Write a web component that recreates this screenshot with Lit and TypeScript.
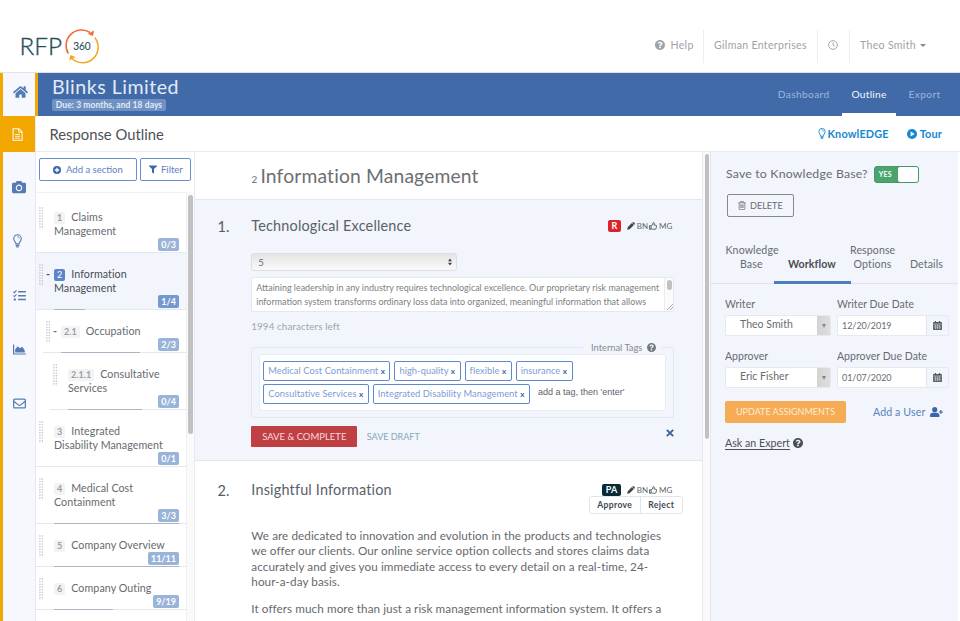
import { LitElement, html, css, svg, nothing } from "lit";
import { customElement, property } from "lit/decorators.js";
import { classMap } from "lit/directives/class-map.js";

const ICONS: Record<string, { box: string; body: unknown }> = {
  home: { box: "0 0 576 512", body: svg`<path fill="currentColor" d="M280.37 148.26L96 300.11V464a16 16 0 0 0 16 16l112.06-.29a16 16 0 0 0 15.92-16V368a16 16 0 0 1 16-16h64a16 16 0 0 1 16 16v95.64a16 16 0 0 0 16 16.05L464 480a16 16 0 0 0 16-16V300L295.67 148.26a12.19 12.19 0 0 0-15.3 0zM571.6 251.47L488 182.56V44.05a12 12 0 0 0-12-12h-56a12 12 0 0 0-12 12v72.61L318.47 43a48 48 0 0 0-61 0L4.34 251.47a12 12 0 0 0-1.6 16.9l25.5 31A12 12 0 0 0 45.15 301l235.22-193.74a12.19 12.19 0 0 1 15.3 0L530.9 301a12 12 0 0 0 16.9-1.6l25.5-31a12 12 0 0 0-1.7-16.93z"/>` },
  help: { box: "8 8 496 496", body: svg`<path fill="currentColor" d="M504 256c0 136.997-111.043 248-248 248S8 392.997 8 256C8 119.083 119.043 8 256 8s248 111.083 248 248zM262.655 90c-54.497 0-89.255 22.957-116.549 63.758-3.536 5.286-2.353 12.415 2.715 16.258l34.699 26.31c5.205 3.947 12.621 3.008 16.665-2.122 17.864-22.658 30.113-35.797 57.303-35.797 20.429 0 45.698 13.148 45.698 32.958 0 14.976-12.363 22.667-32.534 33.976C247.128 238.528 216 254.941 216 296v4c0 6.627 5.373 12 12 12h56c6.627 0 12-5.373 12-12v-1.333c0-28.462 83.186-29.647 83.186-106.667 0-58.002-60.165-102-116.531-102zM256 338c-25.365 0-46 20.635-46 46 0 25.364 20.635 46 46 46s46-20.636 46-46c0-25.365-20.635-46-46-46z"/>` },
  camera: { box: "0 0 512 512", body: svg`<path fill="currentColor" d="M512 144v288c0 26.500-21.500 48-48 48H48c-26.500 0-48-21.500-48-48V144c0-26.500 21.500-48 48-48h88l12.300-32.900c7-18.700 24.900-31.100 44.900-31.100h125.500c20 0 37.900 12.400 44.900 31.100L376 96h88c26.500 0 48 21.500 48 48zM376 288c0-66.200-53.800-120-120-120s-120 53.800-120 120 53.800 120 120 120 120-53.800 120-120zm-40 0c0 44-36 80-80 80s-80-36-80-80 36-80 80-80 80 36 80 80z"/>` },
  filter: { box: "0 0 512 512", body: svg`<path fill="currentColor" d="M487.976 0H24.028C2.710 0-8.047 25.866 7.058 40.971L192 225.941V432c0 7.831 3.821 15.170 10.237 19.662l80 55.980C298.020 518.690 320 507.493 320 487.980V225.941l184.947-184.970C520.021 25.896 509.338 0 487.976 0z"/>` },
  file: { box: "0 0 12 14", body: svg`<g fill="none" stroke="currentColor" stroke-width="1.100"><path d="M1.200.7h6.200l3.600 3.600v9H1.200z"/><path d="M7.200.8v3.700h3.700M3.400 7h5.200M3.400 9h5.200M3.400 11h5.200" stroke-width=".9"/></g>` },
  bulb: { box: "0 0 10 15", body: svg`<g fill="none" stroke="currentColor" stroke-width="1.200" stroke-linecap="round"><path d="M3.300 10.700C3.200 8.900.8 7.700.8 4.800a4.200 4.200 0 0 1 8.400 0c0 2.900-2.400 4.100-2.500 5.900z"/><path d="M3.400 12.300h3.200M4 13.900h2" stroke-width="1.400"/><path d="M5 2.600c1.300 0 2 .8 2 1.800" stroke-width=".9"/></g>` },
  tasks: { box: "0 0 14 12", body: svg`<g fill="none" stroke="currentColor"><path stroke-width="1.700" d="M5.500 2H14M5.500 6.200H14M5.500 10.400H14"/><path stroke-width="1.200" d="M.3 1.900l1.200 1L3.700.5M.3 6.100l1.200 1 2.200-2.400"/></g><rect x=".7" y="9.300" width="2.300" height="2.200" fill="currentColor"/>` },
  chart: { box: "0 0 14 11", body: svg`<path fill="currentColor" d="M0 0h1.300v9.700H14V11H0zM2.300 8.800V5.600L5 2l2.500 2.200L10 2.500l2.600 3.800v2.500z"/>` },
  mail: { box: "0 0 14 11", body: svg`<g fill="none" stroke="currentColor" stroke-width="1.300"><rect x=".7" y=".7" width="12.600" height="9.600" rx="1"/><path d="M.9 3l4.700 4c.8.700 2 .7 2.800 0l4.700-4"/></g>` },
  plus: { box: "0 0 16 16", body: svg`<circle cx="8" cy="8" r="8" fill="currentColor"/><path d="M8 3.600v8.800M3.600 8h8.800" stroke="#fff" stroke-width="2.600"/>` },
  clock: { box: "0 0 16 16", body: svg`<g fill="none" stroke="currentColor" stroke-width="1.500"><circle cx="8" cy="8" r="7"/><path d="M8.200 3.500V8.600l2.600 1.300"/></g>` },
  play: { box: "0 0 16 16", body: svg`<circle cx="8" cy="8" r="8" fill="currentColor"/><path d="M5.800 3.900v8.200L12.300 8z" fill="#fff"/>` },
  pencil: { box: "0 0 16 16", body: svg`<path fill="currentColor" d="M.4 15.600l1-5L9.800 2.200l4 4-8.400 8.400zM10.600 1.400l1-1c.5-.5 1.300-.5 1.800 0l2.200 2.200c.5.5.5 1.300 0 1.800l-1 1z"/>` },
  thumb: { box: "0 0 16 16", body: svg`<g fill="none" stroke="currentColor" stroke-width="1.600" stroke-linejoin="round"><path d="M1 7.500h3v7H1zM4 8c2-.8 3.300-2.500 3.600-4.200C7.700 2.300 8 1 9 1c1.500 0 2 1.300 1.700 2.600L10 6.300h3.600c1.300 0 1.700 1 1.300 1.900l-.6 4.300c-.2 1.300-.9 2-2 2H7.500L4 13.300"/></g>` },
  trash: { box: "0 0 14 16", body: svg`<g fill="none" stroke="currentColor" stroke-width="1.300"><path d="M.5 3.200h13M4.500 3V1h5v2M2 3.300v11c0 .6.400 1 1 1h8c.6 0 1-.4 1-1v-11M5 6v6.500M7 6v6.500M9 6v6.500"/></g>` },
  calendar: { box: "0 0 14 14", body: svg`<path fill="currentColor" d="M0 2.800C0 2 .7 1.600 1.300 1.600h1.500V0h2v1.600h4.400V0h2v1.600h1.500c.7 0 1.300.5 1.300 1.200v1.500H0zM0 5h14v7.800c0 .7-.6 1.200-1.300 1.200H1.300C.6 14 0 13.500 0 12.800z"/><path stroke="#f2f5fb" stroke-width=".7" d="M1 7.800h12M1 10.700h12M4 5.200V13M7 5.200V13M10 5.200V13"/>` },
  userplus: { box: "0 0 18 14", body: svg`<g fill="currentColor"><circle cx="6.500" cy="3.700" r="3.600"/><path d="M0 14v-2.500C0 9.300 1.700 8 3.800 8h5.400C11.300 8 13 9.300 13 11.500V14z"/></g><path d="M15.200 4.300v5.400M12.500 7H18" stroke="currentColor" stroke-width="1.500"/>` },
  cross: { box: "0 0 10 10", body: svg`<path d="M1 1l8 8M9 1L1 9" stroke="currentColor" stroke-width="2.300"/>` },
  grip: { box: "0 0 4 22", body: svg`<path d="M.9.300V22M3.400.300V22" stroke="currentColor" stroke-width="1.300" stroke-dasharray="1.400 1.270"/>` },
};

@customElement("ui-icon")
class UiIcon extends LitElement {
  @property() name = "";
  static styles = css`
    :host { display: inline-block; flex: none; width: 10px; height: 10px; }
    svg { display: block; width: 100%; height: 100%; }
  `;
  render() {
    const i = ICONS[this.name];
    return i ? html`<svg viewBox=${i.box}>${i.body}</svg>` : nothing;
  }
}

interface Section {
  no: string; lines: string[]; count: string; level: number;
  open?: boolean; active?: boolean; progress: number;
}

const SECTIONS: Section[] = [
  { no: "1", lines: ["Claims", "Management"], count: "0/3", level: 0, progress: 0 },
  { no: "2", lines: ["Information", "Management"], count: "1/4", level: 0, open: true, active: true, progress: 25 },
  { no: "2.1", lines: ["Occupation"], count: "2/3", level: 1, open: true, progress: 67 },
  { no: "2.1.1", lines: ["Consultative", "Services"], count: "0/4", level: 2, progress: 67 },
  { no: "3", lines: ["Integrated", "Disability Management"], count: "0/1", level: 0, progress: 0 },
  { no: "4", lines: ["Medical Cost", "Containment"], count: "3/3", level: 0, progress: 100 },
  { no: "5", lines: ["Company Overview"], count: "11/11", level: 0, progress: 100 },
  { no: "6", lines: ["Company Outing"], count: "9/19", level: 0, progress: 47 },
];

const font = css`
  :host { font-family: Lato, "Noto Sans", sans-serif; }
  * { box-sizing: border-box; }
`;

@customElement("outline-list")
class OutlineList extends LitElement {
  static styles = [font, css`
    :host { display: flex; flex-direction: column; width: 159px; border-right: 1px solid #e6ebf3; background: #fff; }
    .actions { display: flex; gap: 3px; padding: 6px 0 0 3px; height: 40px; }
    .btn { height: 23px; display: flex; align-items: center; border: 1px solid #6690cf; border-radius: 2px; color: #5a82c2; font-size: 9.500px; white-space: nowrap; }
    .btn ui-icon { color: #3c65ae; }
    .add { width: 98px; padding-left: 13px; gap: 5px; }
    .add ui-icon { width: 8px; height: 8px; }
    .filter { width: 51px; padding-left: 8px; gap: 4px; }
    .filter ui-icon { width: 8px; height: 9px; }
    .area { flex: 1; min-height: 0; display: flex; }
    .list { width: 150px; overflow: hidden; border-top: 1px solid #f0f2f6; padding-top: 3px; }
    .track { width: 8px; background: #fafafa; border-left: 1px solid #f0f0f0; padding: 3px 0 0 1px; }
    .thumb { width: 5px; height: 239px; border-radius: 3px; background: #c1c1c1; }
    .item { display: flex; position: relative; padding-top: 14px; height: 57px; border-bottom: 1px solid #e4e9f1; color: #666a6e; font-size: 10.700px; line-height: 14px; letter-spacing: .06px; white-space: nowrap; }
    .short { height: 43px; }
    .next { border: 0; }
    .active { background: #f2f5fb; color: #454c54; }
    .l1 { margin-left: 7px; }
    .l2 { margin-left: 14px; }
    .grip { margin: -3px 0 0 3px; width: 4px; height: 22px; color: #c3c6c9; }
    .toggle { width: 11px; text-align: right; font-weight: 700; padding-right: 4px; }
    .no { display: inline-block; min-width: 11px; height: 12px; line-height: 12px; text-align: center; padding: 0 3px; margin-right: 6px; border-radius: 2px; background: #f2f3f4; color: #9a9ea3; font-weight: 700; font-size: 9px; }
    .active .no { background: #5b86cc; color: #fff; font-weight: 400; }
    .count { position: absolute; right: 7px; bottom: 1px; height: 13px; line-height: 13px; border-radius: 2px; padding: 0 3px; background: #9ab3d9; color: #fff; font-size: 9px; font-weight: 700; letter-spacing: 0; }
    .active .count { background: #7499d0; }
    .bar { position: absolute; left: 18px; right: 7px; bottom: -1px; height: 1px; }
    .fill { height: 1px; background: #adb6c3; }
  `];
  render() {
    return html`
      <div class="actions">
        <div class="btn add"><ui-icon name="plus"></ui-icon>Add a section</div>
        <div class="btn filter"><ui-icon name="filter"></ui-icon>Filter</div>
      </div>
      <div class="area">
        <div class="list">
          ${SECTIONS.map((s) => html`
            <div class=${classMap({ item: true, short: s.lines.length === 1, active: !!s.active, l1: s.level === 1, l2: s.level === 2 })}>
              <ui-icon class="grip" name="grip"></ui-icon>
              <div class="toggle">${s.open ? "-" : nothing}</div>
              <div class="text"><span class="no">${s.no}</span>${s.lines[0]}${s.lines.slice(1).map((l) => html`<br>${l}`)}</div>
              <div class="count">${s.count}</div>
              <div class="bar"><div class="fill" style="width:${s.progress}%"></div></div>
            </div>`)}
          <div class="item next"><ui-icon class="grip" name="grip"></ui-icon></div>
        </div>
        <div class="track"><div class="thumb"></div></div>
      </div>`;
  }
}

const TAG_ROWS = [
  ["Medical Cost Containment", "high-quality", "flexible", "insurance"],
  ["Consultative Services", "Integrated Disability Management"],
];

@customElement("question-pane")
class QuestionPane extends LitElement {
  static styles = [font, css`
    :host { display: flex; flex: 1; min-width: 0; overflow: hidden; }
    .content { width: 508px; color: #65696e; white-space: nowrap; overflow: hidden; }
    .track { width: 8px; background: #fafafa; border-left: 1px solid #e8eaee; padding: 2px 0 0 2px; }
    .thumb { width: 4px; height: 285px; border-radius: 3px; background: #c1c1c1; }
    .title { height: 48px; padding: 10px 0 0 56.500px; border-bottom: 1px solid #e2e8f1; font-size: 19.300px; line-height: 28px; letter-spacing: .15px; color: #6c6f72; }
    .title small { font-size: 10px; margin-right: 3px; }
    .q { display: grid; grid-template-columns: 56.300px 423px; }
    .q1 { height: 261px; background: #f2f5fb; border-bottom: 1px solid #e0e5f0; padding-top: 15px; }
    .q2 { padding-top: 18px; }
    .num { padding-left: 22.500px; font-size: 14.500px; line-height: 24px; color: #555c63; }
    .head { display: flex; justify-content: space-between; height: 22px; font-size: 14.400px; line-height: 22px; letter-spacing: .2px; color: #59616a; }
    .meta { display: flex; align-items: center; height: 21px; font-size: 8px; letter-spacing: 0; padding-right: 2px; color: #5c646c; }
    .meta ui-icon { width: 8px; height: 8px; margin-right: 2px; color: #3b4752; }
    .meta ui-icon + span + ui-icon { margin-left: 1px; }
    .state { height: 12px; line-height: 12px; border-radius: 2px; color: #fff; font-size: 9px; font-weight: 700; padding: 0 3.500px; margin-right: 6px; }
    .red { background: #d8252c; }
    .dark { background: #062a38; }
    .select { margin-top: 16px; width: 206px; height: 18px; display: flex; align-items: center; justify-content: space-between; padding: 0 4px 0 6px; border: 1px solid #dcdfe5; border-radius: 3px; background: linear-gradient(#e4e4e4, #fafafa); font-size: 9.500px; }
    .select svg { width: 4px; height: 8px; }
    .editor { margin-top: 6px; height: 35px; display: flex; background: #fff; border: 1px solid #e4e8f0; border-radius: 2px; font-size: 8.950px; line-height: 14px; color: #7b7f83; }
    .editor p { margin: 0; padding: 3px 0 0 4px; flex: 1; }
    .ebar { width: 9px; background: #fbfbfb; border-left: 1px solid #ececec; padding: 2px 0 0 2px; display: flex; flex-direction: column; justify-content: space-between; }
    .ethumb { width: 5px; height: 10px; border-radius: 3px; background: #c1c1c1; }
    .ebar svg { width: 6px; height: 7px; }
    .left { margin-top: 8px; font-size: 9.800px; line-height: 13px; letter-spacing: .1px; color: #a0a5aa; }
    .tags { margin: 7px 0 0; padding: 0 7px 7px; height: 78px; border: 1px solid #e3e7ee; border-radius: 3px; font-size: 9.300px; }
    .tags legend { margin-left: auto; margin-right: 4px; padding: 0 6px 0 8px; height: 14px; display: flex; align-items: center; gap: 5px; color: #858a8f; }
    .tags legend ui-icon { width: 9px; height: 9px; color: #74797f; }
    .box { height: 57px; background: #fff; border: 1px solid #e8ecf3; padding: 6px 3px; border-radius: 2px; display: flex; flex-direction: column; gap: 3px; }
    .row { display: flex; gap: 4px; }
    .tag { height: 20px; line-height: 18px; border: 1px solid #5f8acf; border-radius: 2px; padding: 0 4.500px 0 4px; color: #7a9dd3; letter-spacing: .06px; }
    .tag b { color: #3a62a7; font-size: 8px; }
    .hint { font: 9px/16px "Liberation Sans", sans-serif; margin-left: 4px; color: #5f6368; }
    .foot { display: flex; margin-top: 8px; align-items: center; }
    .save { width: 106px; height: 21px; line-height: 21px; text-align: center; background: #c03f42; border-radius: 1px; color: #f6dcdc; font-size: 9.500px; }
    .draft { flex: 1; padding-left: 9.500px; font-size: 9px; color: #84a8c0; }
    .foot ui-icon { width: 8px; height: 8px; margin-top: -8px; color: #3b6399; }
    .decide { display: flex; width: 94px; height: 18px; margin: -5px -8.500px 0 auto; border: 1px solid #e0e6f1; border-radius: 3px; line-height: 16px; font-size: 8.600px; font-weight: 700; letter-spacing: .35px; color: #3d4852; text-align: center; background: #fff; }
    .decide div:first-child { width: 51px; border-right: 1px solid #e0e6f1; }
    .decide div:last-child { flex: 1; }
    .prose { margin: 0 0 12px; font-size: 11.700px; line-height: 15.300px; letter-spacing: .08px; }
    .first { margin-top: 14px; }
  `];
  private meta(kind: string, label: string) {
    return html`<div class="meta"><span class="state ${kind}">${label}</span>
      <ui-icon name="pencil"></ui-icon><span>BN</span><ui-icon name="thumb"></ui-icon><span>MG</span></div>`;
  }
  render() {
    return html`
      <div class="content">
        <div class="title"><small>2</small>Information Management</div>
        <div class="q q1">
          <div class="num">1.</div>
          <div>
            <div class="head"><span>Technological Excellence</span>${this.meta("red", "R")}</div>
            <div class="select">5<svg viewBox="0 0 5 9"><path fill="#444" d="M2.500 0L5 3.500H0zM0 5.500h5L2.500 9z"/></svg></div>
            <div class="editor">
              <p>Attaining leadership in any industry requires technological excellence. Our proprietary risk management<br>information system transforms ordinary loss data into organized, meaningful information that allows</p>
              <div class="ebar"><div class="ethumb"></div><svg viewBox="0 0 6 7"><path d="M0 6L6 0M3 6l3-3" stroke="#999" stroke-width=".8"/></svg></div>
            </div>
            <div class="left">1994 characters left</div>
            <fieldset class="tags">
              <legend>Internal Tags <ui-icon name="help"></ui-icon></legend>
              <div class="box">
                ${TAG_ROWS.map((row, i) => html`<div class="row">${row.map((t) => html`<span class="tag">${t} <b>x</b></span>`)}${i ? html`<span class="hint">add a tag, then 'enter'</span>` : nothing}</div>`)}
              </div>
            </fieldset>
            <div class="foot"><div class="save">SAVE &amp; COMPLETE</div><div class="draft">SAVE DRAFT</div><ui-icon name="cross"></ui-icon></div>
          </div>
        </div>
        <div class="q q2">
          <div class="num">2.</div>
          <div>
            <div class="head"><span>Insightful Information</span>${this.meta("dark", "PA")}</div>
            <div class="decide"><div>Approve</div><div>Reject</div></div>
            <p class="prose first">We are dedicated to innovation and evolution in the products and technologies<br>we offer our clients. Our online service option collects and stores claims data<br>accurately and gives you immediate access to every detail on a real-time, 24-<br>hour-a-day basis.</p>
            <p class="prose">It offers much more than just a risk management information system. It offers a</p>
          </div>
        </div>
      </div>
      <div class="track"><div class="thumb"></div></div>`;
  }
}

@customElement("workflow-panel")
class WorkflowPanel extends LitElement {
  static styles = [font, css`
    :host { display: block; width: 248px; background: #f2f5fb; border-left: 1px solid #e1e7f0; color: #676c71; white-space: nowrap; }
    .kb { display: flex; align-items: center; padding: 13px 0 0 15px; gap: 6px; font-size: 12.300px; line-height: 18px; letter-spacing: .18px; }
    .switch { width: 45px; height: 17px; border-radius: 3px; background: #4ba36e; border: 1px solid #43976a; display: flex; justify-content: space-between; align-items: center; font-size: 7px; font-weight: 700; color: #fff; padding-left: 4px; }
    .knob { width: 20px; height: 15px; background: #fff; border-radius: 2px; }
    .delete { margin: 11px 0 0 16px; width: 67px; height: 23px; border: 1px solid #85898a; border-radius: 2px; display: flex; align-items: center; padding-left: 9.500px; gap: 4.500px; font-size: 9.100px; }
    .delete ui-icon { width: 8px; height: 9px; }
    .tabs { display: grid; grid-template-columns: 63px 76px 45px 63px; align-items: end; height: 67px; border-bottom: 1px solid #dfe2e6; font-size: 10.600px; line-height: 14px; letter-spacing: .1px; }
    .tab { padding-bottom: 12px; text-align: center; }
    .first { padding-left: 14.500px; text-align: left; }
    .first span { display: block; padding-left: 14.500px; }
    .sel { position: relative; font-weight: 700; color: #4a4e52; }
    .line { position: absolute; left: 0; right: -1px; bottom: -1px; height: 3px; background: #4b7dc4; }
    .grid { display: grid; grid-template-columns: 106px 112px; column-gap: 6px; padding: 13px 0 0 14px; font-size: 10.500px; letter-spacing: .03px; }
    .label { height: 18px; line-height: 14px; }
    .input { height: 21px; display: flex; background: #fff; border: 1px solid #e5e9f0; border-radius: 2px; line-height: 17px; margin-bottom: 13px; }
    .pick { padding-left: 14px; justify-content: space-between; }
    .arrow { width: 13px; background: linear-gradient(90deg, #d3d3d3, #dedede); display: grid; place-items: center; }
    .arrow svg { width: 4px; height: 4px; }
    .date { padding-left: 4px; font-size: 9px; letter-spacing: -.04px; line-height: 19px; justify-content: space-between; }
    .cal { width: 22px; background: #f2f5fb; border-left: 1px solid #e0e4ec; display: grid; place-items: center; }
    .cal ui-icon { width: 9px; height: 9px; color: #555a60; }
    .act { display: flex; align-items: center; padding-left: 14px; }
    .update { width: 121px; height: 22px; line-height: 22px; text-align: center; border-radius: 2px; background: #f6ab55; color: #fdebd3; font-size: 9px; }
    .user { margin-left: 27px; display: flex; align-items: center; gap: 5px; color: #5a82be; font-size: 10.600px; letter-spacing: .12px; }
    .user ui-icon { width: 13px; height: 10px; color: #3b66ac; }
    .ask { display: flex; align-items: center; gap: 3px; margin: 13px 0 0 14px; font-size: 10.700px; line-height: 14px; color: #4c5054; }
    .ask u { text-underline-offset: 2px; }
  `];
  private pick(v: string) {
    return html`<div class="input pick">${v}<span class="arrow"><svg viewBox="0 0 4 4"><path d="M0 0h4L2 4z" fill="#888"/></svg></span></div>`;
  }
  private date(v: string) {
    return html`<div class="input date">${v}<span class="cal"><ui-icon name="calendar"></ui-icon></span></div>`;
  }
  render() {
    return html`
      <div class="kb">Save to Knowledge Base?<div class="switch">YES<div class="knob"></div></div></div>
      <div class="delete"><ui-icon name="trash"></ui-icon>DELETE</div>
      <div class="tabs">
        <div class="tab first">Knowledge<span>Base</span></div>
        <div class="tab sel">Workflow<div class="line"></div></div>
        <div class="tab">Response<br>Options</div>
        <div class="tab">Details</div>
      </div>
      <div class="grid">
        <div class="label">Writer</div><div class="label">Writer Due Date</div>
        ${this.pick("Theo Smith")}${this.date("12/20/2019")}
        <div class="label">Approver</div><div class="label">Approver Due Date</div>
        ${this.pick("Eric Fisher")}${this.date("01/07/2020")}
      </div>
      <div class="act"><div class="update">UPDATE ASSIGNMENTS</div><div class="user">Add a User <ui-icon name="userplus"></ui-icon></div></div>
      <div class="ask"><u>Ask an Expert</u><ui-icon name="help"></ui-icon></div>`;
  }
}

@customElement("app-root")
class AppRoot extends LitElement {
  static styles = [font, css`
    :host { display: flex; flex-direction: column; width: 960px; height: 621px; overflow: hidden; background: #fff; }
    .top { height: 73px; flex: none; display: flex; justify-content: space-between; border-bottom: 1px solid #dfe3ea; padding: 27px 0 0 19px; }
    .logo { width: 80px; height: 38px; }
    .logo text { font-family: Lato, sans-serif; fill: #24505c; }
    .word { font-size: 23.500px; font-weight: 300; stroke: #24505c; stroke-width: .35px; }
    .mark { font-size: 10.500px; stroke: #24505c; stroke-width: .1px; }
    .menu { display: flex; height: 33px; margin-top: 3px; font-size: 10.600px; letter-spacing: .3px; color: #9fa2a7; }
    .menu div { display: flex; align-items: center; gap: 6px; padding-bottom: 3px; border-right: 1px solid #eceef2; white-space: nowrap; }
    .menu div:last-child { border: 0; }
    .help { width: 49.500px; } .org { width: 114px; padding-left: 10px; } .time { width: 32px; padding-left: 10px; } .me { width: 110px; padding-left: 10px; }
    .caret { border: 3px solid transparent; border-top-color: #888; border-bottom: 0; margin-left: -2px; }
    .body { display: flex; flex: 1; min-height: 0; }
    .rail { width: 36px; flex: none; border-left: 3px solid #f2a800; border-right: 1px solid #e4e9f3; background: #f6f8fd; color: #557bb3; display: flex; flex-direction: column; align-items: center; }
    .cell { height: 54px; width: 32px; display: grid; place-items: center; }
    .cell ui-icon { width: 14px; height: 14px; }
    .first { height: 43px; padding-bottom: 6px; padding-left: 2px; }
    .first ui-icon { width: 15px; }
    .on { width: 35px; margin: 0 0 8px -3px; height: 36px; background: #f2a800; color: #fff; }
    .on ui-icon { width: 11px; height: 13px; }
    .cell .narrow { width: 9px; margin-right: 4px; }
    .cell .flat { width: 13px; height: 11px; margin-left: 1px; }
    .page { flex: 1; min-width: 0; display: flex; flex-direction: column; }
    .banner { height: 43px; flex: none; display: flex; justify-content: space-between; margin-left: -1px; border-left: 3px solid #f2a800; background: #416aa9; color: #e3ebf7; padding-left: 14px; }
    .company { font-size: 19.600px; line-height: 24px; padding-top: 2px; letter-spacing: .5px; }
    .due { width: 114px; height: 12px; line-height: 12px; border-radius: 2px; background: #7091c3; font-size: 8.500px; letter-spacing: .07px; font-weight: 700; text-align: center; white-space: nowrap; }
    .nav { display: flex; gap: 12.500px; padding-right: 19.500px; font-size: 10.200px; letter-spacing: .36px; line-height: 43px; color: #9db5dc; }
    .cur { width: 54px; text-align: center; color: #f4f7fc; border-bottom: 3px solid #fff; letter-spacing: .25px; }
    .sub { height: 36px; flex: none; display: flex; justify-content: space-between; border-bottom: 1px solid #e6ebf3; padding: 0 18px 0 13.500px; line-height: 36px; }
    .name { font-size: 14.800px; color: #4e5256; }
    .links { display: flex; align-items: center; color: #1488d0; font-size: 10.900px; font-weight: 700; line-height: 35px; letter-spacing: .15px; }
    .links .b { width: 8px; height: 11px; margin-right: 2px; }
    .links .p { margin: 0 3px 0 18px; }
    .cols { display: flex; flex: 1; min-height: 0; }
    .edge { width: 2px; }
  `];
  render() {
    return html`
      <div class="top">
        <svg class="logo" viewBox="0 0 80 38">
          <text class="word" x=".5" y="27.500" textLength="42.500" lengthAdjust="spacingAndGlyphs">RFP</text>
          <g fill="none" stroke-width="1.500"><path stroke="#f26a35" d="M49.300 26.500A15.500 15.500 0 0 1 71 5.500"/><path stroke="#f3a71f" d="M75.700 10.500A15.500 15.500 0 0 1 53 31.500"/></g>
          <path fill="#f26a35" d="M75 3.500l-1 5.600-5.200-2z"/><path fill="#f3a71f" d="M50.300 33.500l1-5.600 5.200 2z"/>
          <text class="mark" x="54.200" y="22.700" textLength="17.500" lengthAdjust="spacingAndGlyphs">360</text>
        </svg>
        <div class="menu">
          <div class="help"><ui-icon name="help"></ui-icon>Help</div><div class="org">Gilman Enterprises</div>
          <div class="time"><ui-icon name="clock"></ui-icon></div><div class="me">Theo Smith<span class="caret"></span></div>
        </div>
      </div>
      <div class="body">
        <div class="rail">
          <div class="cell first"><ui-icon name="home"></ui-icon></div>
          <div class="cell on"><ui-icon name="file"></ui-icon></div>
          <div class="cell"><ui-icon name="camera"></ui-icon></div>
          <div class="cell"><ui-icon class="narrow" name="bulb"></ui-icon></div>
          <div class="cell"><ui-icon class="flat" name="tasks"></ui-icon></div>
          <div class="cell"><ui-icon class="flat" name="chart"></ui-icon></div>
          <div class="cell"><ui-icon class="flat" name="mail"></ui-icon></div>
        </div>
        <div class="page">
          <div class="banner">
            <div><div class="company">Blinks Limited</div><div class="due">Due: 3 months, and 18 days</div></div>
            <div class="nav"><span>Dashboard</span><span class="cur">Outline</span><span>Export</span></div>
          </div>
          <div class="sub"><div class="name">Response Outline</div>
            <div class="links"><ui-icon class="b" name="bulb"></ui-icon>KnowlEDGE<ui-icon class="p" name="play"></ui-icon>Tour</div></div>
          <div class="cols"><outline-list></outline-list><question-pane></question-pane><workflow-panel></workflow-panel><div class="edge"></div></div>
        </div>
      </div>`;
  }
}
